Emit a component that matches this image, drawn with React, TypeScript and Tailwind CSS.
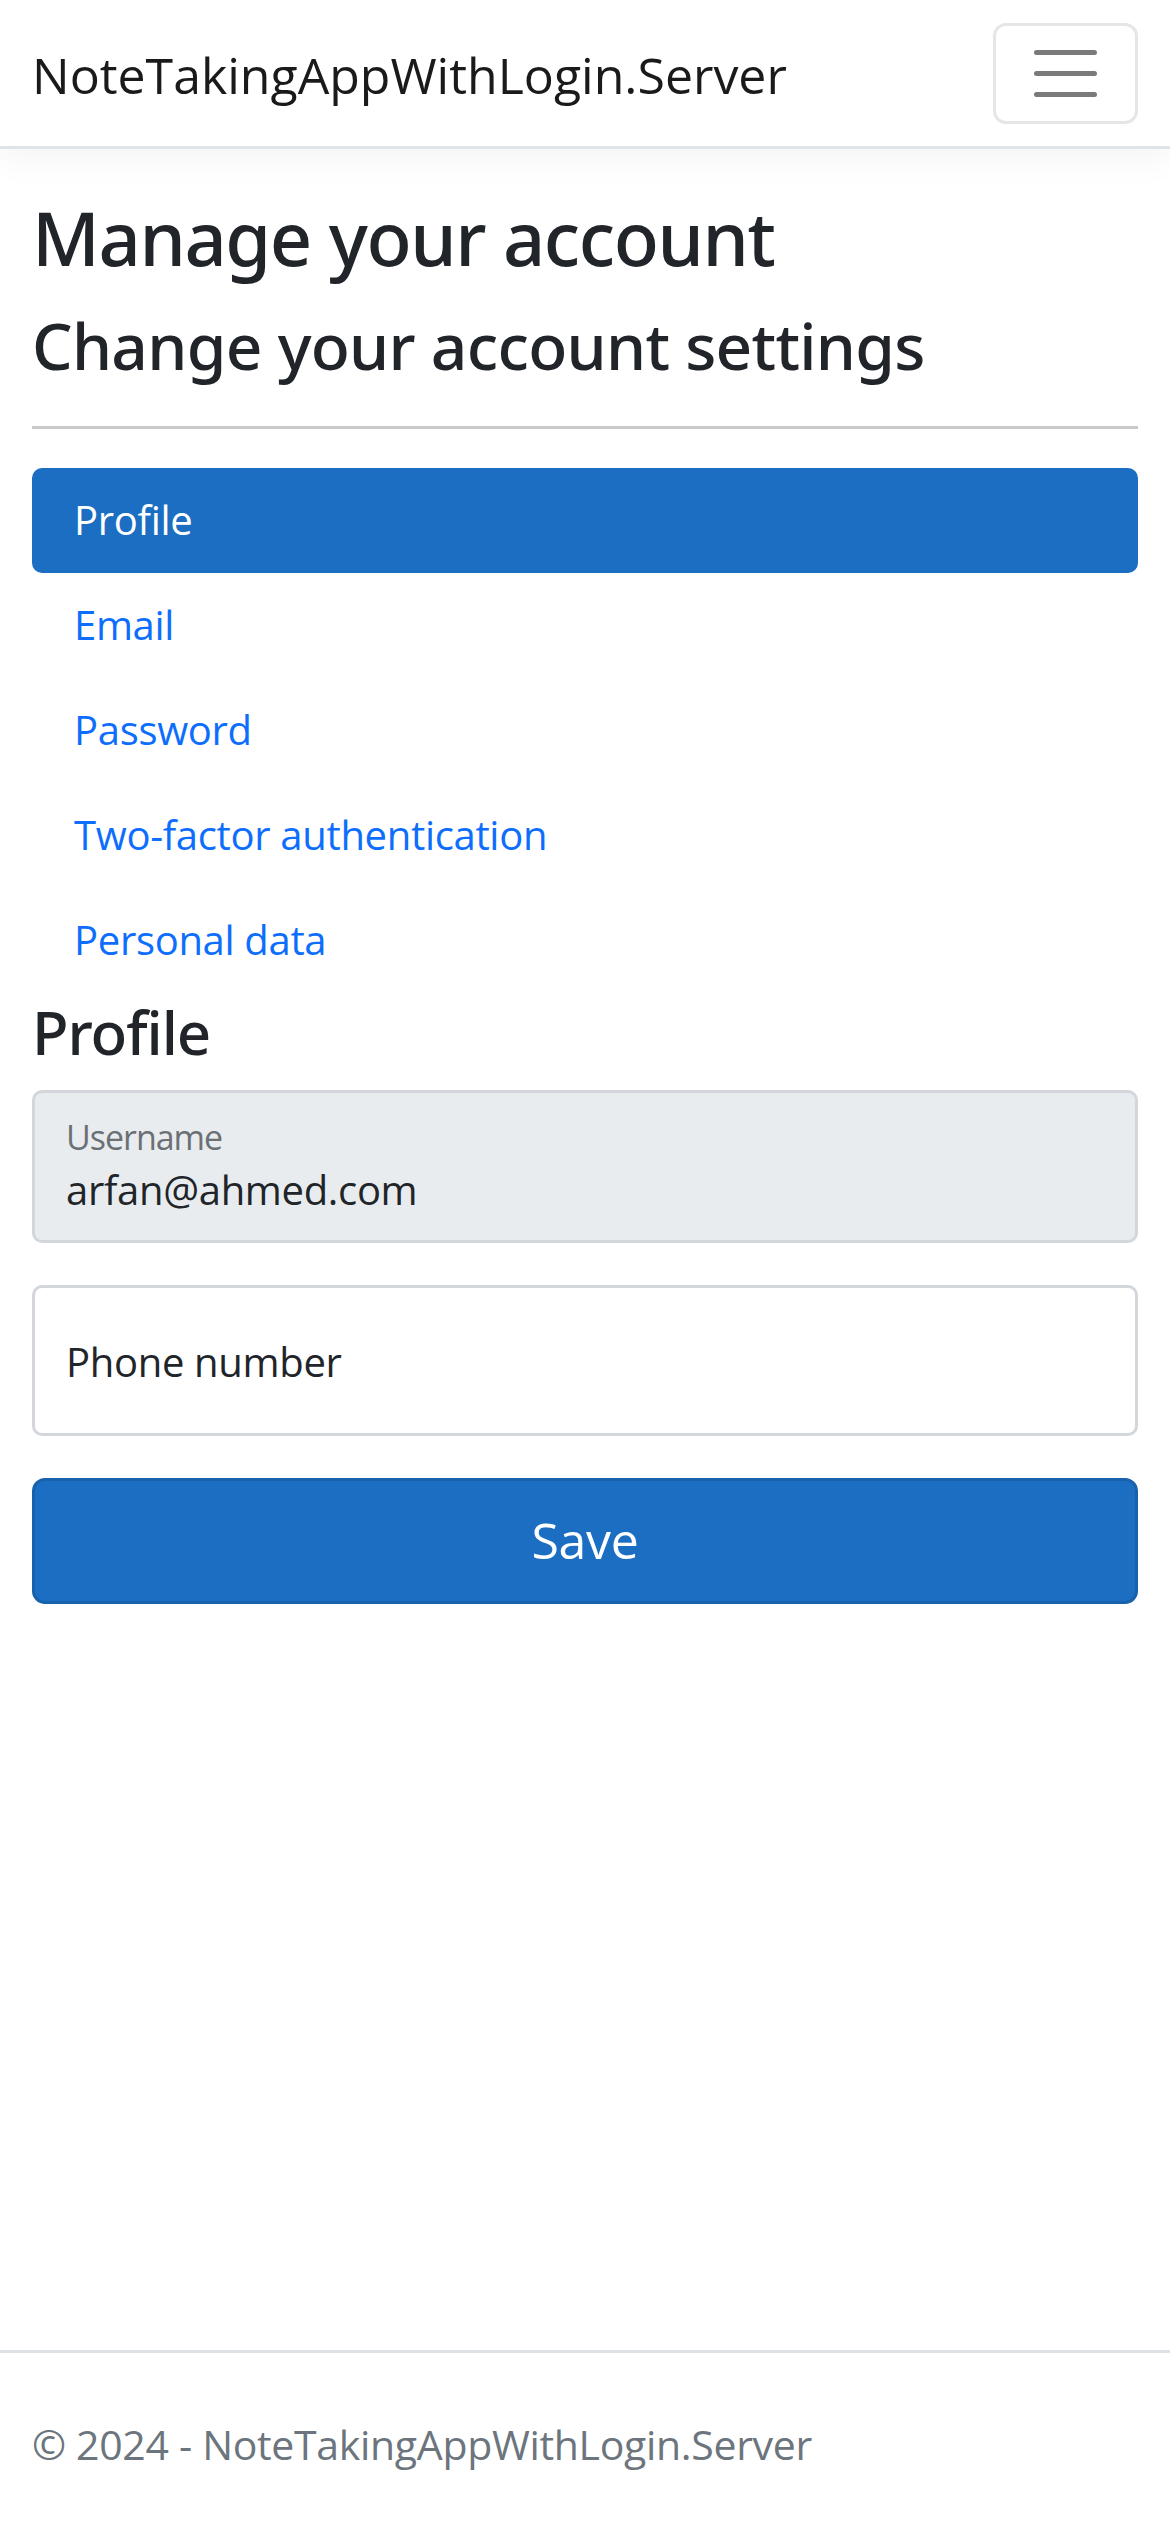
const links = ["Profile", "Email", "Password", "Two-factor authentication", "Personal data"];

function Toggler() {
  return (
    <button className="w-[145px] h-[101px] border-[3px] border-[#e6e6e6] rounded-[13px] flex items-center justify-center">
      <svg width="63" height="47" viewBox="0 0 63 47">
        <path d="M2.5 2.5h58M2.5 23.5h58M2.5 44.5h58" stroke="#7a7a7a" strokeWidth="5" strokeLinecap="round" />
      </svg>
    </button>
  );
}

export default function App() {
  return (
    <div className="min-h-screen flex flex-col bg-white text-[#212529] font-['Open_Sans','Noto_Sans',sans-serif] tracking-[-0.02em]">
      <header className="h-[149px] shrink-0 border-b-[3px] border-[#e1e4e7] bg-white shadow-[0_8px_36px_rgba(0,0,0,0.05)] flex items-center justify-between px-[32px]">
        <a className="text-[50px] leading-none tracking-normal text-[#1a1a1a] pt-[3px]">NoteTakingAppWithLogin.Server</a>
        <Toggler />
      </header>

      <main className="flex-1 px-[32px] pt-[45px]">
        <h1 className="text-[74px] leading-[1.2] font-medium font-['Noto_Sans',sans-serif] tracking-[-0.019em]">Manage your account</h1>
        <h2 className="mt-[25px] text-[64px] leading-[1.2] font-medium font-['Noto_Sans',sans-serif] tracking-[-0.011em]">Change your account settings</h2>
        <hr className="mt-[41px] border-t-[3px] border-[#c8c9ca]" />

        <ul className="mt-[39px] flex flex-col">
          {links.map((l, i) => (
            <li key={l}>
              <a
                className={
                  i === 0
                    ? "h-[105px] flex items-center px-[42px] rounded-[10px] bg-[#1b6ec2] text-white text-[40px]"
                    : "h-[105px] flex items-center px-[42px] text-[#0d6efd] text-[40px]"
                }
              >
                {l}
              </a>
            </li>
          ))}
        </ul>

        <h3 className="mt-[3px] text-[60px] leading-[1.2] font-medium font-['Noto_Sans',sans-serif] tracking-[-0.018em]">Profile</h3>

        <div className="mt-[22px] h-[153px] border-[3px] border-[#d3d7db] rounded-[10px] bg-[#e9ecef] px-[31px] pt-[22px]">
          <div className="text-[34px] leading-[44px] tracking-[-0.03em] text-[#6b7075]">Username</div>
          <div className="mt-[6px] text-[40px] leading-[50px]">arfan@ahmed.com</div>
        </div>

        <div className="mt-[42px] h-[151px] border-[3px] border-[#d3d7db] rounded-[10px] bg-white px-[31px] flex items-center">
          <span className="text-[40px] pt-[3px]">Phone number</span>
        </div>

        <button className="mt-[42px] w-full h-[126px] rounded-[13px] bg-[#1b6ec2] border-[3px] border-[#1861ac] text-white text-[50px] flex items-center justify-center">
          Save
        </button>
      </main>

      <footer className="h-[182px] shrink-0 border-t-[3px] border-[#dee2e6] px-[32px] flex items-center pt-[4px] text-[#6c757d] text-[41px]">
        © 2024 - NoteTakingAppWithLogin.Server
      </footer>
    </div>
  );
}
